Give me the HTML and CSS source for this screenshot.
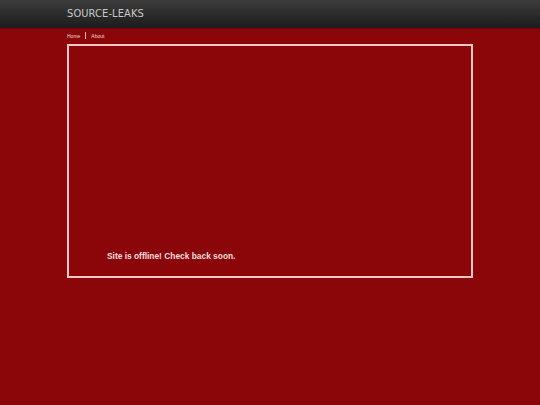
FILE: index.html
```html
<!DOCTYPE html>
<html>
<head>
<meta charset="utf-8">
<link rel="stylesheet" href="styles.css">
</head>
<body>
<div class="header">
  <div class="wrap"><div class="title">SOURCE-LEAKS</div></div>
</div>
<div class="wrap">
  <div class="nav"><a class="nav-link">Home</a><span class="sep"></span><a class="nav-link">About</a></div>
  <div class="box">
    <p class="msg">Site is offline! Check back soon.</p>
  </div>
</div>
</body>
</html>
```
FILE: styles.css
```css
html, body { margin: 0; padding: 0; }
body { background: #8a0609; font-family: "Liberation Sans", Arial, sans-serif; width: 540px; height: 405px; overflow: hidden; }
.header { height: 28px; background: linear-gradient(#3c3c3c, #1c1c1c); border-bottom: 1px solid #6a0406; }
.wrap { width: 406px; margin-left: 67px; }
.title { font-family: "Liberation Sans Narrow", "DejaVu Sans Condensed", sans-serif; color: #c8c8c8; font-size: 11px; line-height: 28px; letter-spacing: 0.1px; }
.nav { display: flex; align-items: center; height: 13px; font-size: 5px; color: #f0d0d0; }
.nav-link { color: #f2d6d6; }
.sep { width: 1px; height: 7px; background: #e8b8b8; margin: 0 5px; }
.box { margin-top: 2px; height: 230px; border: 2px solid #f4c4c8; display: flex; flex-direction: column; justify-content: flex-end; }
.msg { margin: 0 0 15px 38px; color: #f2dede; font-weight: bold; font-size: 8.4px; }
```
